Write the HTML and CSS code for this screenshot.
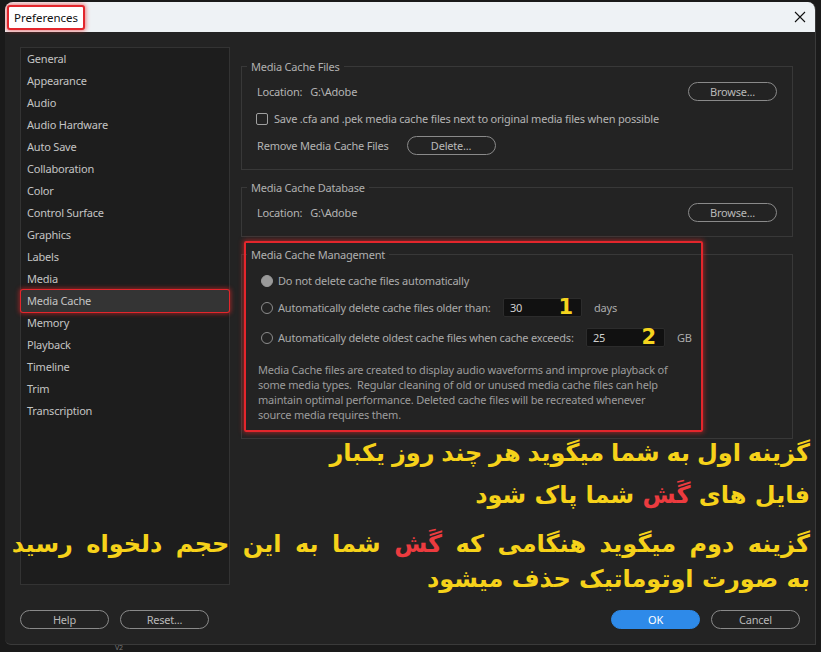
FILE: index.html
```html
<!DOCTYPE html>
<html lang="en">
    <head>
        <meta charset="UTF-8">
        <title>Preferences</title>
        <link rel="stylesheet" href="styles.css">
    </head>
    <body>
        <div class="dialog">
            <div class="titlebar">
                <span class="title">Preferences</span>
                <svg class="close" width="12" height="12" viewBox="0 0 12 12">
                    <path d="M1 1 L11 11 M11 1 L1 11" stroke="#111" stroke-width="1.1" fill="none"/>
                </svg>
            </div>
            <div class="content">
                <ul class="sidebar">
                    <li>General</li>
                    <li>Appearance</li>
                    <li>Audio</li>
                    <li>Audio Hardware</li>
                    <li>Auto Save</li>
                    <li>Collaboration</li>
                    <li>Color</li>
                    <li>Control Surface</li>
                    <li>Graphics</li>
                    <li>Labels</li>
                    <li>Media</li>
                    <li class="active">Media Cache</li>
                    <li>Memory</li>
                    <li>Playback</li>
                    <li>Timeline</li>
                    <li>Trim</li>
                    <li>Transcription</li>
                </ul>
                <div class="panel">
                    <fieldset class="group">
                        <legend>Media Cache Files</legend>
                        <div class="row">
                            <span>Location:</span><span class="path">G:\Adobe</span>
                            <button class="btn push">Browse...</button>
                        </div>
                        <div class="row">
                            <span class="checkbox"></span>
                            <span>Save .cfa and .pek media cache files next to original media files when possible</span>
                        </div>
                        <div class="row">
                            <span>Remove Media Cache Files</span>
                            <button class="btn delete">Delete...</button>
                        </div>
                    </fieldset>
                    <fieldset class="group">
                        <legend>Media Cache Database</legend>
                        <div class="row">
                            <span>Location:</span><span class="path">G:\Adobe</span>
                            <button class="btn push">Browse...</button>
                        </div>
                    </fieldset>
                    <fieldset class="group manage">
                        <legend>Media Cache Management</legend>
                        <div class="row radio-row">
                            <span class="radio checked"></span>
                            <span>Do not delete cache files automatically</span>
                        </div>
                        <div class="row radio-row">
                            <span class="radio"></span>
                            <span class="label days-label">Automatically delete cache files older than:</span>
                            <span class="field days-field">30<b class="marker">1</b></span>
                            <span class="unit">days</span>
                        </div>
                        <div class="row radio-row third">
                            <span class="radio"></span>
                            <span class="label gb-label">Automatically delete oldest cache files when cache exceeds:</span>
                            <span class="field">25<b class="marker">2</b></span>
                            <span class="unit">GB</span>
                        </div>
                        <p class="desc">Media Cache files are created to display audio waveforms and improve playback of<br>some media types.&nbsp; Regular cleaning of old or unused media cache files can help<br>maintain optimal performance. Deleted cache files will be recreated whenever<br>source media requires them.</p>
                    </fieldset>
                    <div class="mark-box"></div>
                </div>
            </div>
            <div class="footer">
                <button class="btn">Help</button>
                <button class="btn">Reset...</button>
                <button class="btn ok">OK</button>
                <button class="btn">Cancel</button>
            </div>
        </div>
        <span class="track-label">V2</span>
        <div class="note" dir="rtl" lang="fa">
            <div class="line l1">گزینه اول به شما میگوید هر چند روز یکبار</div>
            <div class="line l2">فایل های <span class="red">گَش</span> شما پاک شود</div>
            <div class="line l3">گزینه دوم میگوید هنگامی که <span class="red">گَش</span> شما به این حجم دلخواه رسید</div>
            <div class="line l4">به صورت اوتوماتیک حذف میشود</div>
        </div>
    </body>
</html>
```

FILE: styles.css
```css
body {
    margin: 0;
    padding: 2px 5px 0 5px;
    height: 652px;
    box-sizing: border-box;
    background-color: #1a1a1a;
    font-family: "Noto Sans", sans-serif;
    font-size: 11px;
    letter-spacing: -0.2px;
    overflow: hidden;
    position: relative;
}
.dialog {
    width: 811px;
    height: 643px;
    background-color: #232323;
    border-radius: 8px 8px 0 6px;
    border-right: 1px solid #3a3a3a;
    border-bottom: 1px solid #3a3a3a;
    box-sizing: border-box;
    display: flex;
    flex-direction: column;
    overflow: hidden;
}
.titlebar {
    height: 30px;
    flex: none;
    background-color: #eef2f5;
    display: flex;
    align-items: center;
    padding-left: 2px;
}
.title {
    font-size: 11.5px;
    letter-spacing: 0;
    color: #111;
    padding: 3px 5px 3px 5px;
    border: 2px solid #e3262c;
    border-radius: 3px;
    box-shadow: 0 0 4px 1px rgba(240, 40, 40, 0.6);
    background-color: #fff;
}
.close {
    margin-left: auto;
    margin-right: 9px;
}
.content {
    flex: 1;
    display: flex;
    padding: 15px 22px 0 15px;
}
.sidebar {
    list-style: none;
    margin: 0;
    padding: 0;
    width: 210px;
    height: 538px;
    box-sizing: border-box;
    background-color: #1d1d1d;
    border: 1px solid #333;
    color: #c4c4c4;
}
.sidebar li {
    height: 22px;
    line-height: 22px;
    padding-left: 6px;
}
.sidebar .active {
    background-color: #343434;
    border-radius: 2px;
    box-shadow: 0 0 0 1px #e3262c, 0 0 4px 2px rgba(240, 40, 40, 0.55);
}
.panel {
    flex: 1;
    margin-left: 11px;
    margin-top: 12px;
    position: relative;
}
.group {
    border: 1px solid #383838;
    margin: 0 0 10px 0;
    padding: 4px 15px 10px 15px;
    color: #b4b4b4;
}
.group legend {
    padding: 0 4px;
    margin-left: -10px;
    line-height: 15px;
    color: #b0b0b0;
}
.row {
    display: flex;
    align-items: center;
    height: 27px;
    white-space: nowrap;
}
.path {
    margin-left: 8px;
}
.btn {
    width: 89px;
    height: 19px;
    border: 1px solid #8a8a8a;
    border-radius: 10px;
    background: transparent;
    color: #b8b8b8;
    font-family: "Noto Sans", sans-serif;
    font-size: 11px;
    letter-spacing: -0.2px;
    padding: 0;
}
.push {
    margin-left: auto;
}
.delete {
    margin-left: 18px;
}
.checkbox {
    width: 10px;
    height: 10px;
    border: 1.5px solid #a0a0a0;
    border-radius: 2px;
    margin: 0 6px 0 -1px;
}
.manage {
    padding-top: 5px;
    padding-bottom: 16px;
}
.radio {
    width: 10px;
    height: 10px;
    border: 1.5px solid #8c8c8c;
    border-radius: 50%;
    margin: 0 5px 0 4px;
    flex: none;
}
.radio.checked {
    background-color: #9a9a9a;
    border-color: #9a9a9a;
}
.radio-row {
    color: #ababab;
}
.third {
    margin-top: 3px;
}
.days-label {
    width: 225px;
}
.gb-label {
    width: 308px;
}
.field {
    width: 79px;
    height: 19px;
    box-sizing: border-box;
    background-color: #111;
    border: 1px solid #2c2c2c;
    border-radius: 2px;
    display: flex;
    align-items: center;
    padding-left: 6px;
    color: #d0d0d0;
}
.marker {
    margin-left: auto;
    margin-right: 8px;
    color: #f5d41e;
    font-size: 21px;
    font-family: "DejaVu Sans", sans-serif;
    line-height: 1;
}
.unit {
    margin-left: 12px;
}
.desc {
    margin: 11px 0 0 1px;
    line-height: 15px;
    color: #9c9c9c;
    white-space: nowrap;
}
.mark-box {
    position: absolute;
    left: 3px;
    top: 182px;
    width: 455px;
    height: 187px;
    border: 2px solid #e3262c;
    border-radius: 2px;
    box-shadow: 0 0 5px 1px rgba(240, 40, 40, 0.55);
}
.footer {
    height: 50px;
    flex: none;
    display: flex;
    align-items: center;
    padding: 0 15px 0 15px;
    gap: 11px;
}
.footer .ok {
    margin-left: auto;
    background-color: #2e8ae9;
    border-color: #2e8ae9;
    color: #fff;
}
.track-label {
    position: absolute;
    left: 115px;
    top: 644px;
    color: #777;
    font-size: 7px;
    line-height: 8px;
}
.note {
    position: absolute;
    right: 11px;
    top: 432px;
    font-family: "DejaVu Sans", sans-serif;
    font-weight: bold;
    font-size: 24px;
    letter-spacing: 0;
    color: #f6d21a;
    text-align: right;
}
.line {
    height: 42px;
    line-height: 42px;
    white-space: nowrap;
}
.l1 {
    word-spacing: -1.5px;
}
.l3 {
    margin-top: 10px;
    height: 37px;
    line-height: 37px;
    word-spacing: 5.1px;
}
.l4 {
    height: 33px;
    line-height: 33px;
}
.red {
    color: #ec3b3f;
}
```
